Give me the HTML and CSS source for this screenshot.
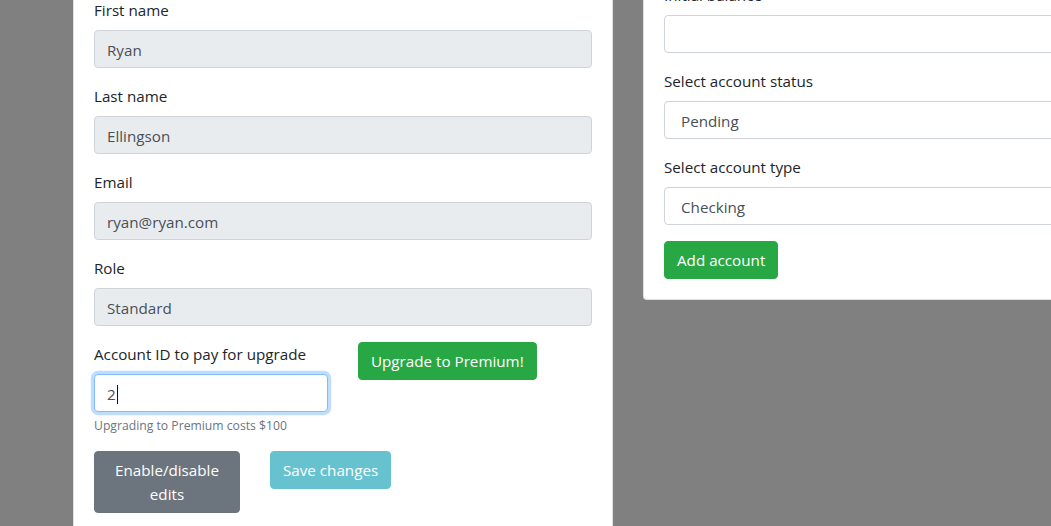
FILE: index.html
```html
<!DOCTYPE html>
<html lang="en">
<head>
<meta charset="utf-8">
<title>Profile</title>
<link rel="stylesheet" href="styles.css">
</head>
<body>
<div class="page">
  <section class="card card-profile">
    <div class="form-group">
      <label class="form-label">First name</label>
      <input class="form-control" type="text" value="Ryan" disabled>
    </div>
    <div class="form-group">
      <label class="form-label">Last name</label>
      <input class="form-control" type="text" value="Ellingson" disabled>
    </div>
    <div class="form-group">
      <label class="form-label">Email</label>
      <input class="form-control" type="text" value="ryan@ryan.com" disabled>
    </div>
    <div class="form-group">
      <label class="form-label">Role</label>
      <input class="form-control" type="text" value="Standard" disabled>
    </div>
    <div class="upgrade-row">
      <div class="upgrade-col">
        <label class="form-label">Account ID to pay for upgrade</label>
        <div class="form-control focused"><span class="value">2</span><span class="caret"></span></div>
        <small class="form-text">Upgrading to Premium costs $100</small>
      </div>
      <button class="btn btn-success" type="button">Upgrade to Premium!</button>
    </div>
    <div class="actions">
      <button class="btn btn-secondary btn-toggle" type="button">Enable/disable edits</button>
      <button class="btn btn-info" type="button" disabled>Save changes</button>
    </div>
    <div class="spacer"></div>
  </section>

  <section class="card card-account">
    <div class="form-group">
      <label class="form-label">Initial balance</label>
      <input class="form-control plain" type="text" value="">
    </div>
    <div class="form-group">
      <label class="form-label">Select account status</label>
      <select class="form-control plain select">
        <option>Pending</option>
      </select>
    </div>
    <div class="form-group">
      <label class="form-label">Select account type</label>
      <select class="form-control plain select">
        <option>Checking</option>
      </select>
    </div>
    <button class="btn btn-success" type="button">Add account</button>
  </section>
</div>
</body>
</html>
```
FILE: styles.css
```css
html, body {
  margin: 0;
  height: 526px;
  overflow: hidden;
}

body {
  background: #808080;
  font-family: "Open Sans", "Noto Sans", Arial, sans-serif;
  font-size: 15.2px;
  line-height: 24px;
  color: #212529;
}

.page {
  display: flex;
  align-items: flex-start;
  gap: 30px;
  padding-left: 73px;
  margin-top: -38px;
}

.card {
  flex: 0 0 auto;
  box-sizing: border-box;
  width: 540px;
  background: #fff;
  border: 1px solid rgba(0, 0, 0, 0.125);
  border-radius: 4px;
  padding: 20px;
}

.card-profile {
  margin-top: 15px;
}

.form-group {
  margin-bottom: 16px;
}

.form-label {
  display: block;
  margin-bottom: 8px;
  height: 24px;
}

.form-control {
  display: block;
  box-sizing: border-box;
  width: 100%;
  height: 38px;
  margin: 0;
  padding: 7px 12px 5px;
  font: inherit;
  color: #495057;
  background: #fff;
  border: 1px solid #ced4da;
  border-radius: 4px;
  outline: none;
}

.form-control:disabled {
  background: #e9ecef;
  color: #495057;
  opacity: 1;
  -webkit-text-fill-color: #495057;
}

.select {
  -webkit-appearance: none;
  appearance: none;
  padding-left: 16px;
}

.focused {
  border-color: #80bdff;
  box-shadow: 0 0 0 3.2px rgba(0, 123, 255, 0.25);
  display: flex;
  align-items: center;
  color: #495057;
}

.caret {
  display: inline-block;
  width: 1px;
  height: 19px;
  background: #111;
  margin-left: 1px;
}

.upgrade-row {
  display: flex;
  align-items: flex-start;
  gap: 30px;
  margin-bottom: 16px;
}

.upgrade-col {
  width: 234px;
}

.form-text {
  display: block;
  margin-top: 4px;
  font-size: 12.2px;
  line-height: 19px;
  color: #6c757d;
}

.btn {
  display: inline-block;
  box-sizing: border-box;
  font: inherit;
  line-height: 24px;
  padding: 6px 12px;
  border: 1px solid transparent;
  border-radius: 4px;
  color: #fff;
  text-align: center;
  cursor: pointer;
}

.btn-success {
  background: #28a745;
  border-color: #28a745;
}

.btn-secondary {
  background: #6c757d;
  border-color: #6c757d;
}

.btn-info {
  background: #17a2b8;
  border-color: #17a2b8;
}

.btn:disabled {
  opacity: 0.65;
  cursor: default;
}

.actions {
  display: flex;
  align-items: flex-start;
  gap: 30px;
}

.btn-toggle {
  width: 146px;
}

.spacer {
  height: 40px;
}
```
